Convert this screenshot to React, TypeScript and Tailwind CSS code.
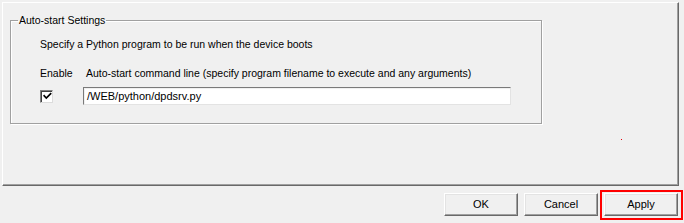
import React from "react";

function Check() {
  return (
    <span className="flex h-[13px] w-[13px] items-center justify-center border border-t-[#808080] border-l-[#808080] border-b-[#dcdcdc] border-r-[#dcdcdc] bg-white shadow-[inset_1px_1px_0_#404040]">
      <svg width="9" height="9" viewBox="0 0 9 9" className="ml-[1px] mt-[1px]">
        <polyline points="1.2,3.8 3.3,6 7.6,1.8" fill="none" stroke="#000" strokeWidth="1.7" strokeLinecap="square" />
      </svg>
    </span>
  );
}

function Btn({ label }: { label: string }) {
  return (
    <button className="flex h-[23px] w-[74px] items-center justify-center border border-t-white border-l-white border-b-[#696969] border-r-[#696969] bg-[#f0f0f0] text-[11px] text-black shadow-[inset_-1px_-1px_0_#a0a0a0,inset_1px_1px_0_#e3e3e3]">
      {label}
    </button>
  );
}

export default function App() {
  return (
    <div
      className="flex h-[223px] w-[684px] flex-col overflow-hidden bg-[#f0f0f0] text-[10.5px] text-black"
      style={{ fontFamily: '"Liberation Sans", Arial, sans-serif' }}
    >
      <div className="relative ml-[2px] mt-[2px] h-[184px] w-[677px] border-l border-t border-b border-r border-l-white border-t-white border-b-[#696969] border-r-[#696969] pl-[7px] pt-[11px] shadow-[inset_-1px_-1px_0_#a0a0a0]">
        <fieldset className="h-[110px] w-[532px] border border-[#a0a0a0] shadow-[inset_1px_1px_0_white,1px_1px_0_white]">
          <legend className="ml-[7px] px-[1px] leading-[13px]">Auto-start Settings</legend>
          <div className="flex flex-col pl-[29px] pt-[11px]">
            <div className="leading-[13px]">Specify a Python program to be run when the device boots</div>
            <div className="mt-[16px] flex leading-[13px]">
              <span className="w-[46px]">Enable</span>
              <span>Auto-start command line (specify program filename to execute and any arguments)</span>
            </div>
            <div className="mt-[7px] flex items-center">
              <div className="w-[43px]">
                <Check />
              </div>
              <div className="flex h-[18px] w-[428px] items-center border border-t-[#7a7a7a] border-l-[#7a7a7a] border-b-[#e3e3e3] border-r-[#e3e3e3] bg-white pl-[3px] text-[11px] shadow-[inset_1px_1px_0_#f0f0f0]">
                /WEB/python/dpdsrv.py
              </div>
            </div>
          </div>
        </fieldset>
        <span className="absolute left-[618px] top-[136px] h-[1px] w-[1px] bg-red-600" />
      </div>
      <div className="mt-[7px] flex justify-end gap-[6px] pr-[6px]">
        <Btn label="OK" />
        <Btn label="Cancel" />
        <div className="relative">
          <Btn label="Apply" />
          <span className="pointer-events-none absolute -bottom-[4px] -left-[4px] -right-[5px] -top-[3px] border-2 border-[#ff0000]" />
        </div>
      </div>
    </div>
  );
}
